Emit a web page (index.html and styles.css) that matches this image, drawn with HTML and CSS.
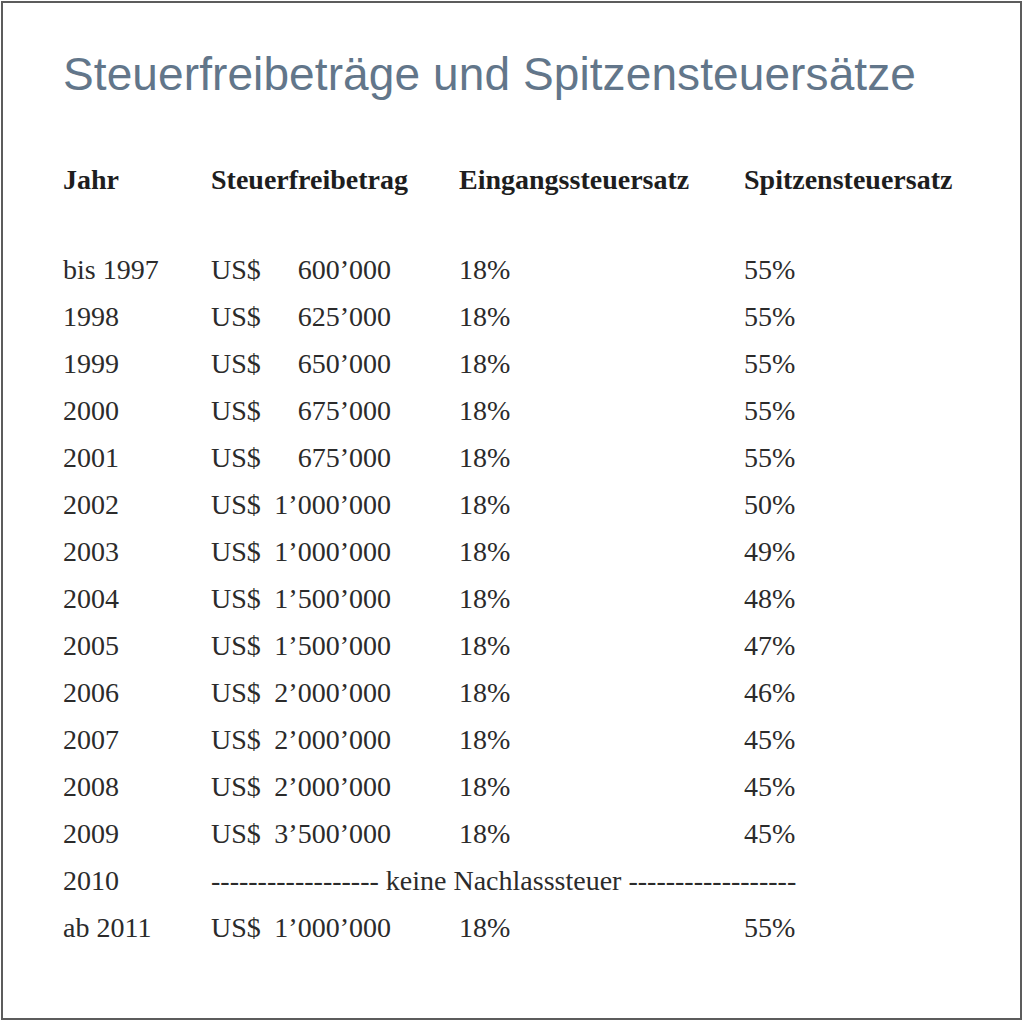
FILE: index.html
```html
<!DOCTYPE html>
<html lang="de">
<head>
<meta charset="utf-8">
<title>Steuerfreibeträge und Spitzensteuersätze</title>
<link rel="stylesheet" href="styles.css">
</head>
<body>
<div class="frame">
  <h1 class="title">Steuerfreibeträge und Spitzensteuersätze</h1>
  <div class="table">
    <div class="row head">
      <div class="c1">Jahr</div>
      <div class="c2">Steuerfreibetrag</div>
      <div class="c3">Eingangssteuersatz</div>
      <div class="c4">Spitzensteuersatz</div>
    </div>
    <div class="body">
      <div class="row"><div class="c1">bis 1997</div><div class="c2 amt"><span>US$</span><span>600’000</span></div><div class="c3">18%</div><div class="c4">55%</div></div>
      <div class="row"><div class="c1">1998</div><div class="c2 amt"><span>US$</span><span>625’000</span></div><div class="c3">18%</div><div class="c4">55%</div></div>
      <div class="row"><div class="c1">1999</div><div class="c2 amt"><span>US$</span><span>650’000</span></div><div class="c3">18%</div><div class="c4">55%</div></div>
      <div class="row"><div class="c1">2000</div><div class="c2 amt"><span>US$</span><span>675’000</span></div><div class="c3">18%</div><div class="c4">55%</div></div>
      <div class="row"><div class="c1">2001</div><div class="c2 amt"><span>US$</span><span>675’000</span></div><div class="c3">18%</div><div class="c4">55%</div></div>
      <div class="row"><div class="c1">2002</div><div class="c2 amt"><span>US$</span><span>1’000’000</span></div><div class="c3">18%</div><div class="c4">50%</div></div>
      <div class="row"><div class="c1">2003</div><div class="c2 amt"><span>US$</span><span>1’000’000</span></div><div class="c3">18%</div><div class="c4">49%</div></div>
      <div class="row"><div class="c1">2004</div><div class="c2 amt"><span>US$</span><span>1’500’000</span></div><div class="c3">18%</div><div class="c4">48%</div></div>
      <div class="row"><div class="c1">2005</div><div class="c2 amt"><span>US$</span><span>1’500’000</span></div><div class="c3">18%</div><div class="c4">47%</div></div>
      <div class="row"><div class="c1">2006</div><div class="c2 amt"><span>US$</span><span>2’000’000</span></div><div class="c3">18%</div><div class="c4">46%</div></div>
      <div class="row"><div class="c1">2007</div><div class="c2 amt"><span>US$</span><span>2’000’000</span></div><div class="c3">18%</div><div class="c4">45%</div></div>
      <div class="row"><div class="c1">2008</div><div class="c2 amt"><span>US$</span><span>2’000’000</span></div><div class="c3">18%</div><div class="c4">45%</div></div>
      <div class="row"><div class="c1">2009</div><div class="c2 amt"><span>US$</span><span>3’500’000</span></div><div class="c3">18%</div><div class="c4">45%</div></div>
      <div class="row"><div class="c1">2010</div><div class="span">------------------ keine Nachlasssteuer ------------------</div></div>
      <div class="row"><div class="c1">ab 2011</div><div class="c2 amt"><span>US$</span><span>1’000’000</span></div><div class="c3">18%</div><div class="c4">55%</div></div>
    </div>
  </div>
</div>
</body>
</html>
```

FILE: styles.css
```css
html, body {
  margin: 0;
  padding: 0;
  background: #ffffff;
}

.frame {
  box-sizing: border-box;
  margin: 1px 0 0 1px;
  width: 1021px;
  height: 1019px;
  border: 2px solid #5c5c5c;
  padding: 48px 0 0 60px;
}

.title {
  margin: 0;
  font-family: "Liberation Sans", Arial, sans-serif;
  font-weight: normal;
  font-size: 46px;
  line-height: 46px;
  color: #62768a;
  letter-spacing: 0.1px;
}

.table {
  margin-top: 59px;
  font-family: "Liberation Serif", "Times New Roman", serif;
  font-size: 28px;
  color: #2b2b2b;
}

.row {
  display: grid;
  grid-template-columns: 148px 248px 285px auto;
  height: 47px;
  line-height: 47px;
  white-space: nowrap;
}

.head {
  font-weight: bold;
  color: #1e1e1e;
}

.body {
  margin-top: 43px;
}

.amt {
  display: flex;
  justify-content: space-between;
  width: 180px;
}

.span {
  grid-column: 2 / 5;
}
```
